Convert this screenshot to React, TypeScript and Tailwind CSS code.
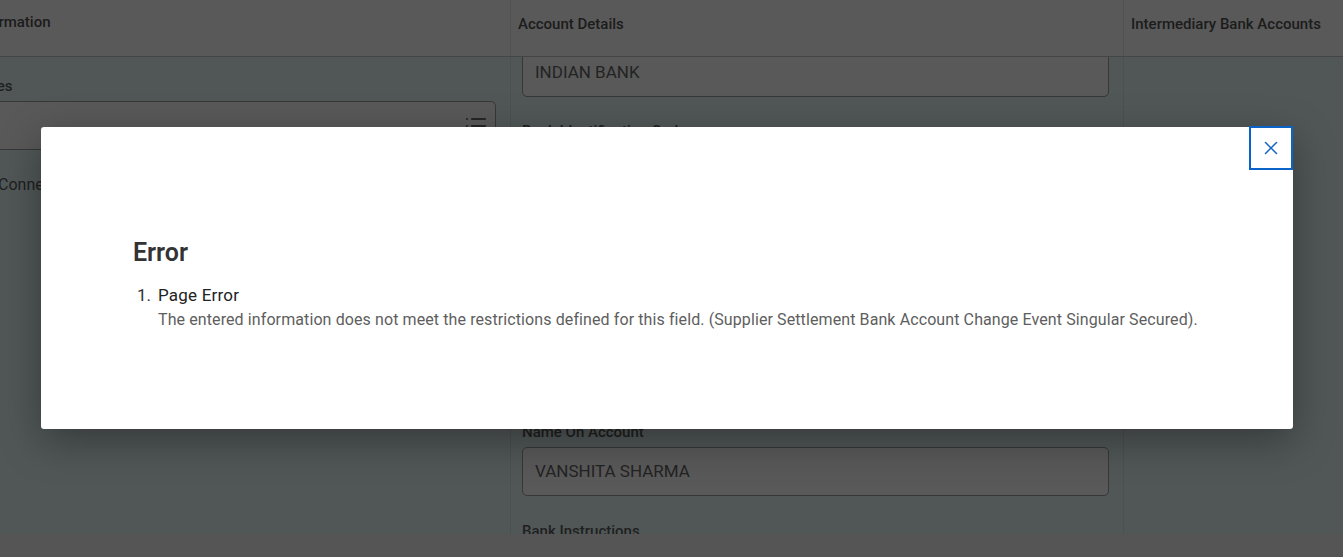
import { List, X } from "lucide-react";

type FieldProps = {
  label: string;
  value?: string;
  icon?: boolean;
  className?: string;
};

function Field({ label, value, icon, className = "" }: FieldProps) {
  return (
    <div className={className}>
      <div className="h-5 text-[15px] leading-5 font-medium text-[#1f1f1f] whitespace-nowrap">{label}</div>
      <div className="mt-[5px] h-[49px] rounded-[5px] border border-[#363838] bg-[#595959] pl-3 pr-[7px] flex items-center justify-between">
        <span className="text-[17px] text-[#232323] whitespace-nowrap">{value}</span>
        {icon && <List size={24} strokeWidth={2.2} className="text-[#262626]" />}
      </div>
    </div>
  );
}

export default function App() {
  return (
    <div className="relative h-[557px] w-[1343px] overflow-hidden bg-[#515757] font-['Roboto',sans-serif]">
      {/* header row */}
      <div className="flex h-[57px] border-b border-[#444646] bg-[#595959]">
        <div className="w-[511px] shrink-0 pt-[12px] border-r border-[#505252] overflow-hidden">
          <span className="block -ml-[28px] text-[15px] leading-5 font-medium text-[#1c1c1c] whitespace-nowrap">Information</span>
        </div>
        <div className="w-[613px] shrink-0 pt-[12px] pl-[7px] border-r border-[#505252]">
          <span className="text-[15px] leading-5 font-medium text-[#1c1c1c]">Account Details</span>
        </div>
        <div className="flex-1 pt-[12px] pl-[7px]">
          <span className="text-[15px] leading-5 font-medium text-[#1c1c1c] whitespace-nowrap">Intermediary Bank Accounts</span>
        </div>
      </div>

      {/* body */}
      <div className="flex h-[477px]">
        <div className="w-[511px] shrink-0 border-r border-[#4b5050] overflow-hidden">
          <div className="-ml-[60px] w-[556px] pt-[19px]">
            <Field label="Currencies" icon />
          </div>
          <div className="mt-[25px] -ml-[2px] text-[16px] leading-5 text-[#1f1f1f] whitespace-nowrap">Connected Banks</div>
        </div>

        <div className="w-[613px] shrink-0 border-r border-[#4b5050] overflow-hidden pl-[11px] pr-[14px]">
          <div className="-mt-[8px]">
            <div className="h-[48px] rounded-[5px] border border-[#363838] bg-[#595959] px-3 flex items-center">
              <span className="text-[17px] text-[#232323]">INDIAN BANK</span>
            </div>
            <Field label="Bank Identification Code" className="mt-[24px]" />
            <Field label="Bank Account Number" className="mt-[25px]" />
            <Field label="Account Type" className="mt-[25px]" />
            <Field label="Name On Account" value="VANSHITA SHARMA" className="mt-[29px]" />
            <Field label="Bank Instructions" className="mt-[25px]" />
          </div>
        </div>

        <div className="flex-1" />
      </div>

      {/* footer band */}
      <div className="h-[23px] bg-[#555555]" />

      {/* error dialog */}
      <div className="absolute left-[41px] top-[127px] w-[1252px] h-[302px] rounded-[3px] bg-white shadow-[0_12px_40px_rgba(0,0,0,0.35)]">
        <button className="absolute -top-px right-0 w-[44px] h-[44px] flex items-center justify-center border-2 border-[#0a63c9] bg-white">
          <X size={22} strokeWidth={1.7} className="text-[#1666c4]" />
        </button>
        <div className="pl-[92px] pt-[111px]">
          <h2 className="text-[25px] leading-[30px] font-semibold text-[#333333]">Error</h2>
          <ol className="mt-[17px] pl-[4px]">
            <li className="flex">
              <span className="w-[21px] text-[17px] leading-5 text-[#333333]">1.</span>
              <div>
                <div className="text-[17px] leading-5 tracking-[0.2px] text-[#222222]">Page Error</div>
                <div className="mt-[5px] text-base leading-5 tracking-[0.1px] text-[#5e5e5e] whitespace-nowrap">
                  The entered information does not meet the restrictions defined for this field. (Supplier Settlement Bank Account Change Event Singular Secured).
                </div>
              </div>
            </li>
          </ol>
        </div>
      </div>
    </div>
  );
}
